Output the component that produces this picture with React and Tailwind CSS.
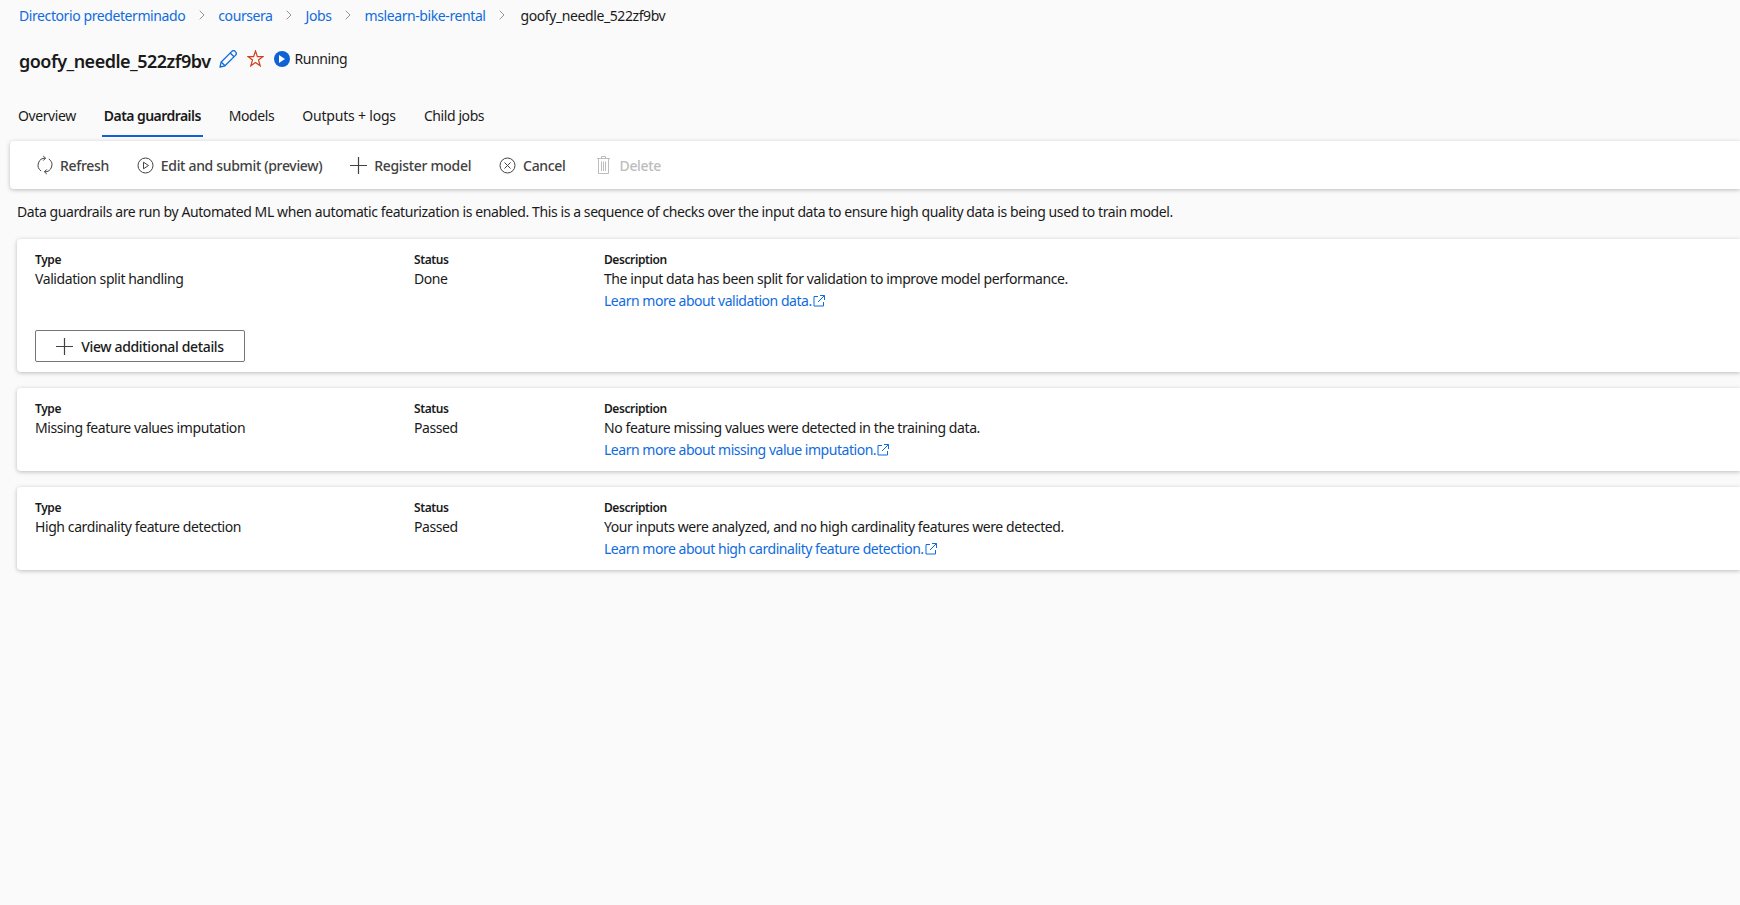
import React from 'react';
import { ChevronRight } from 'lucide-react';

const crumbs = ['Directorio predeterminado', 'coursera', 'Jobs', 'mslearn-bike-rental'];

const tabs = [
  { label: 'Overview', className: '' },
  { label: 'Data guardrails', className: 'font-semibold tracking-[-0.55px] border-b-2 border-[#0f62d6] px-[2px] -mx-[2px]' },
  { label: 'Models', className: '' },
  { label: 'Outputs + logs', className: 'tracking-[-0.2px]' },
  { label: 'Child jobs', className: '' },
];

const rows = [
  {
    type: 'Validation split handling',
    status: 'Done',
    description: 'The input data has been split for validation to improve model performance.',
    link: 'Learn more about validation data.',
    details: true,
  },
  {
    type: 'Missing feature values imputation',
    status: 'Passed',
    description: 'No feature missing values were detected in the training data.',
    link: 'Learn more about missing value imputation.',
  },
  {
    type: 'High cardinality feature detection',
    status: 'Passed',
    description: 'Your inputs were analyzed, and no high cardinality features were detected.',
    link: 'Learn more about high cardinality feature detection.',
  },
];

const RefreshIcon = () => (
  <svg width="16" height="20" viewBox="0 0 16 20" fill="none" stroke="currentColor" strokeWidth="1">
    <path d="M8.5 3.2A7 7 0 0 0 4.2 16" />
    <path d="M7.5 16.8A7 7 0 0 0 11.8 4" />
    <path d="M6.2 1L8.6 3.2L6.2 5.6" />
    <path d="M9.8 14.4L7.4 16.8L9.8 19" />
  </svg>
);

const PlayCircleIcon = () => (
  <svg width="17" height="17" viewBox="0 0 17 17" fill="none" stroke="currentColor" strokeWidth="1">
    <circle cx="8.5" cy="8.5" r="7.5" />
    <path d="M6.5 5.2L11.5 8.5L6.5 11.8Z" />
  </svg>
);

const PlusIcon = ({ className = '' }) => (
  <svg className={className} width="17" height="17" viewBox="0 0 17 17" fill="none" stroke="currentColor" strokeWidth="1.2">
    <path d="M8.5 0V17M0 8.5H17" />
  </svg>
);

const CancelIcon = () => (
  <svg width="17" height="17" viewBox="0 0 17 17" fill="none" stroke="currentColor" strokeWidth="1">
    <circle cx="8.5" cy="8.5" r="7.5" />
    <path d="M5.5 5.5L11.5 11.5M11.5 5.5L5.5 11.5" />
  </svg>
);

const TrashIcon = () => (
  <svg width="13" height="20" viewBox="0 0 13 20" fill="none" stroke="currentColor" strokeWidth="1">
    <path d="M0 3.5H13M4.5 3.5V1.5H8.5V3.5M1.5 3.5V18.5H11.5V3.5M4.5 6.5V16M6.5 6.5V16M8.5 6.5V16" />
  </svg>
);

const PencilIcon = () => (
  <svg width="18" height="18" viewBox="0 0 18 18" fill="none" stroke="currentColor" strokeWidth="1.3" strokeLinejoin="round">
    <path d="M1 17L2.2 12L12.6 1.6A2 2 0 0 1 16.4 5.4L6 15.8Z" />
    <path d="M11.2 3L15 6.8M2.2 12L6 15.8" />
  </svg>
);

const StarIcon = () => (
  <svg width="17" height="17" viewBox="0 0 17 17" fill="none" stroke="currentColor" strokeWidth="1.2">
    <path d="M8.5 1L10.4 6.6H16L11.5 10L13.2 15.8L8.5 12.4L3.8 15.8L5.5 10L1 6.6H6.6Z" />
  </svg>
);

const ExternalIcon = () => (
  <svg className="ml-px" width="12" height="12" viewBox="0 0 12 12" fill="none" stroke="currentColor" strokeWidth="1">
    <path d="M5 1.5H1V11H10.5V7M7 .5H11.5V5M11.5 .5L5 7" />
  </svg>
);

const ToolbarButton = ({ icon, label, disabled, className = 'gap-[7px]' }) => (
  <button className={`flex items-center tracking-[-0.33px] ${disabled ? 'text-[#bdbdbd]' : 'text-[#424242]'} ${className}`}>
    {icon}
    <span className="font-medium">{label}</span>
  </button>
);

const GuardrailCard = ({ row }) => (
  <div className="bg-white rounded-l-sm shadow-[0_1px_4px_rgba(0,0,0,0.25)] pl-[18px] pt-[13px] pb-[10px]">
    <div className="flex">
      <div className="w-[379px]">
        <div className="text-xs font-semibold leading-[16px]">Type</div>
        <div className="leading-[22px]">{row.type}</div>
      </div>
      <div className="w-[190px]">
        <div className="text-xs font-semibold leading-[16px]">Status</div>
        <div className="leading-[22px]">{row.status}</div>
      </div>
      <div>
        <div className="text-xs font-semibold leading-[16px]">Description</div>
        <div className="leading-[22px]">{row.description}</div>
        <a className="flex items-center leading-[22px] text-[#0f6cde] tracking-[-0.47px]">
          {row.link}
          <ExternalIcon />
        </a>
      </div>
    </div>
    {row.details && (
      <button className="flex items-center justify-center gap-[8px] w-[210px] h-8 mt-[18px] border border-[#757575] rounded-[2px] font-medium tracking-[-0.35px]">
        <PlusIcon className="text-[#424242]" />
        View additional details
      </button>
    )}
  </div>
);

export default function App() {
  return (
    <div className="min-h-screen bg-[#fafafa] text-[14px] text-[#1a1a1a] font-['Noto_Sans',sans-serif] tracking-[-0.41px]">
      <nav className="flex items-center h-[30px] pl-[19px]">
        {crumbs.map((c) => (
          <React.Fragment key={c}>
            <a className="text-[#0f6cde]">{c}</a>
            <ChevronRight className="w-4 h-4 mx-[8.5px] text-[#616161]" strokeWidth={1} />
          </React.Fragment>
        ))}
        <span className="ml-[2px]">goofy_needle_522zf9bv</span>
      </nav>

      <div className="flex items-center h-[32px] mt-[15px] pl-[19px]">
        <h1 className="text-[18px] font-semibold tracking-[-0.5px]">goofy_needle_522zf9bv</h1>
        <span className="ml-[8px] -mt-[5px] text-[#0f6cde]"><PencilIcon /></span>
        <span className="ml-[10px] -mt-[5px] text-[#d13f1f]"><StarIcon /></span>
        <span className="flex items-center justify-center w-4 h-4 ml-[10px] -mt-[5px] rounded-full bg-[#0f62d6]">
          <span className="w-0 h-0 ml-px border-y-[4px] border-y-transparent border-l-[6px] border-l-white" />
        </span>
        <span className="ml-[5px] -mt-[5px]">Running</span>
      </div>

      <div className="flex gap-[28px] mt-[23px] pl-[18px]">
        {tabs.map((t) => (
          <div key={t.label} className={`h-[37px] pt-[5px] ${t.className}`}>
            {t.label}
          </div>
        ))}
      </div>

      <div className="flex items-center gap-[28px] h-[48px] mt-[4px] ml-[10px] pl-[27px] bg-white rounded-l-sm shadow-[0_1px_4px_rgba(0,0,0,0.25)]">
        <ToolbarButton icon={<RefreshIcon />} label="Refresh" />
        <ToolbarButton icon={<PlayCircleIcon />} label="Edit and submit (preview)" />
        <ToolbarButton icon={<PlusIcon />} label="Register model" />
        <ToolbarButton icon={<CancelIcon />} label="Cancel" />
        <ToolbarButton icon={<TrashIcon />} label="Delete" disabled className="ml-[4px] gap-[9px]" />
      </div>

      <p className="mt-[12px] ml-[17px] leading-[22px]">
        Data guardrails are run by Automated ML when automatic featurization is enabled. This is a sequence of checks over the input data to ensure high quality data is being used to train model.
      </p>

      <div className="flex flex-col gap-4 mt-[16px] ml-[17px]">
        {rows.map((row) => (
          <GuardrailCard key={row.type} row={row} />
        ))}
      </div>
    </div>
  );
}
